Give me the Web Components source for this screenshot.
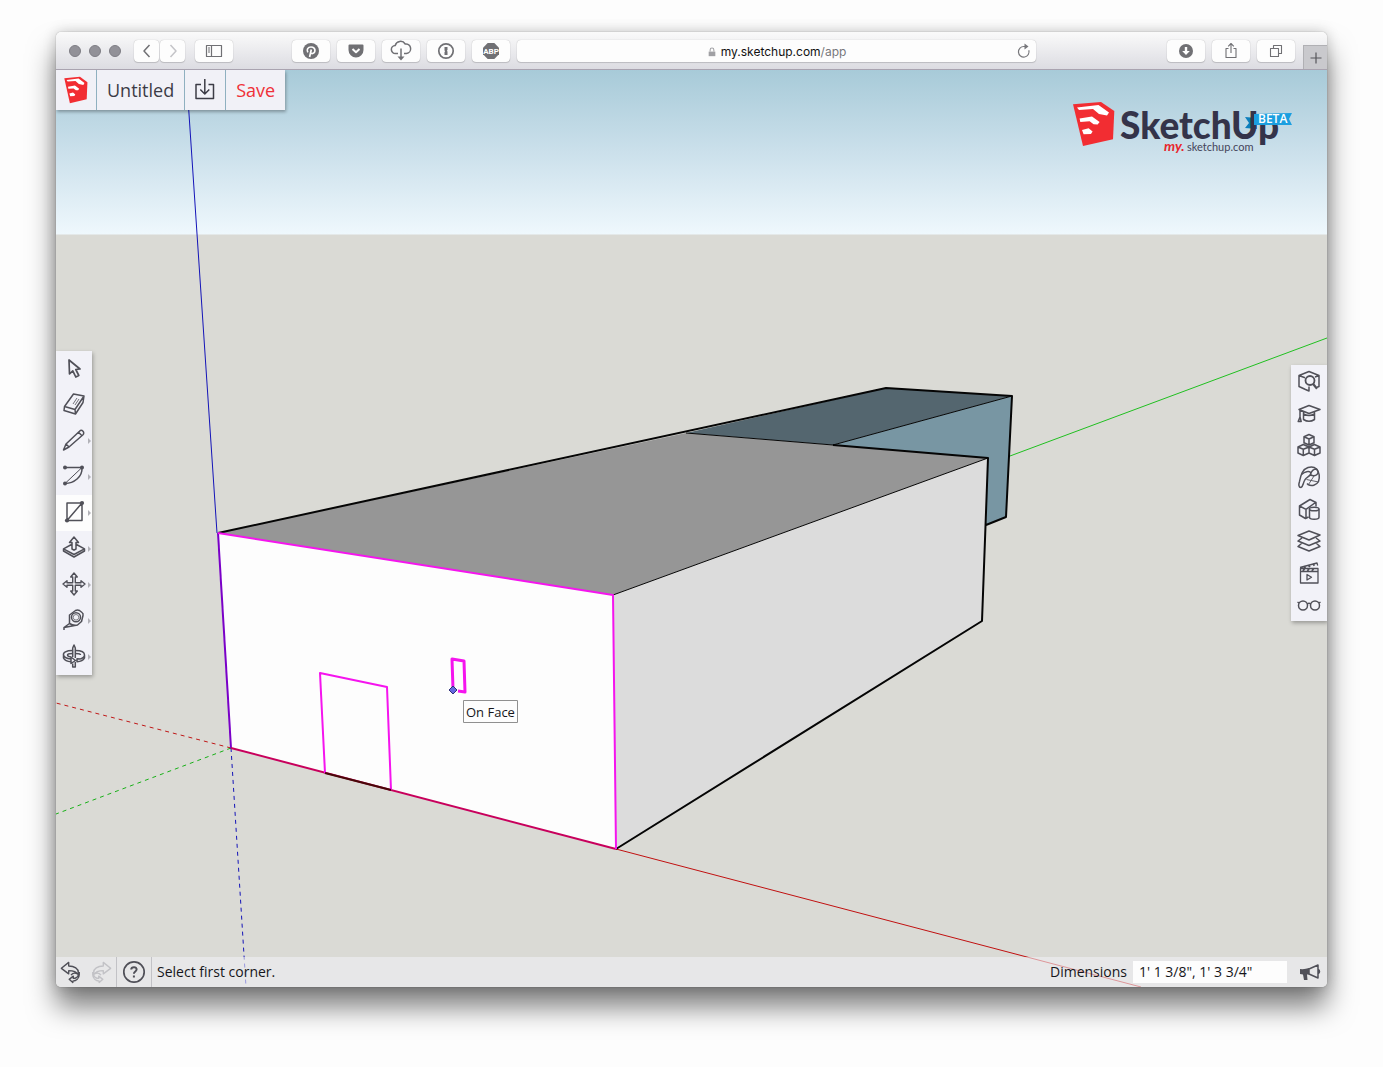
<!DOCTYPE html>
<html lang="en">
<head>
<meta charset="utf-8">
<title>my.sketchup.com/app</title>
<style>
  html, body { height: 100%; margin: 0; }
  body { background: #fdfdfd; font-family: "Open Sans", "Noto Sans", sans-serif; color: #16161a; }
</style>
</head>
<body>
<sketch-page></sketch-page>

<script>
const ICONS = {
  back: '<path d="M14.500 6 9 12l5.500 6"/>',
  forward: '<path d="M9.500 6 15 12l-5.500 6"/>',
  sidebar: '<g stroke-width="1.2"><path d="M4.500 6.500h15v11h-15zM9.500 6.500v11"/><path d="M6 9h2M6 11h2M6 13h2"/></g>',
  pinterest: '<circle cx="12" cy="12" r="8" fill="currentColor" stroke="none"/><path d="M8.800 13.300C7.200 10.500 9 8 12 8c2.600 0 4.200 1.600 3.900 3.800-.3 2.400-3 3.700-4.200 1.800M12.300 10.500 10.600 18" stroke="#fdfdfd" stroke-width="1.700"/>',
  pocket: '<path d="M4.500 6.500q0-1 1-1h13q1 0 1 1v4.500a7.500 7.500 0 0 1-15 0z" fill="currentColor" stroke="none"/><path d="m8.500 10 3.500 3.300L15.500 10" stroke="#fdfdfd" stroke-width="2"/>',
  cloud: '<path d="M9 14.500H6.500a4 4 0 0 1-.3-8 5.500 5.500 0 0 1 10-1.500 4.700 4.700 0 0 1 1.300 9.500H15M12 9.500V19"/><path d="M8.500 17.500h7L12 21.500z" fill="currentColor" stroke="none"/>',
  onepass: '<circle cx="12" cy="12" r="7.200" stroke-width="1.700"/><path d="M10.500 8h3v3l-.7.8.7.8V16h-3v-3l.7-.8-.7-.8z" fill="currentColor" stroke="none"/>',
  abp: '<path d="M8.700 4h6.600L20 8.700v6.600L15.300 20H8.700L4 15.300V8.700z" fill="currentColor" stroke="none"/><text x="12" y="15" font-size="8" font-weight="700" text-anchor="middle" fill="#fff" stroke="none" font-family="Roboto, sans-serif">ABP</text>',
  lock: '<path d="M4 11h16v11H4z" fill="currentColor" stroke="none"/><path d="M7.500 11V7a4.500 4.500 0 0 1 9 0v4" stroke-width="2.500"/>',
  reload: '<path d="M16.800 10.200A5.300 5.300 0 1 1 12 6.500h2" stroke-width="1.200"/><path d="m12.500 3.500 4 3-4 3z" fill="currentColor" stroke="none"/>',
  download: '<circle cx="12" cy="12" r="7" fill="currentColor" stroke="none"/><path d="M12 8v5" stroke="#fff" stroke-width="2.400"/><path d="m8.200 12 3.800 4 3.800-4z" fill="#fff" stroke="none"/>',
  share: '<g stroke-width="1.100"><path d="M9.500 9.500H7v9h10v-9h-2.500M12 14V4.500M9.200 7.300 12 4.500l2.800 2.800"/></g>',
  tabs: '<g stroke-width="1.100"><path d="M6.500 9.500h8v8h-8zM9.500 9.500v-3h8v8h-3"/></g>',
  plus: '<path d="M12 6.500v11M6.500 12h11" stroke-width="1.200"/>',
  mark: '<g transform="translate(.3 -1.200) scale(.56 .6)" stroke="none"><path d="M0 2.300 28 0l13.300 9-1.300 28.300L10 44z" fill="#f22d32"/><path d="M4 5.500 25.500 3 36 10.500l-2 3-8-1.500-6-5-14 1zM6.600 16.600l12.400-2 7.600 5.400-2 2.500-4-.2-4-3-9.300.7zM9 28l6.600-1.700 4 3.300-1.600 2.400-7.400.3z" fill="#fff"/></g>',
  save: '<path d="M8 6.500H3v14h17.500v-14h-5M11.800 1v15M7.300 11.500l4.500 4.500 4.500-4.500"/>',
  select: '<path d="m7 3 .5 14 3.300-3.200 3 6.200 3-1.500-3-6 4.200-.5z" stroke-width="1.700"/>',
  eraser: '<path d="M11.500 1 22 3l-1 6.500L13.500 21 2 17.500l.5-4zM2.500 13.500l10.500 3L22 3M13 16.500l.5 4.500"/><path d="m11 11 4-6M13 12l4-6" stroke-width=".8"/>',
  pencil: '<path d="M1.500 21 4 15 17.500 2.200a2.300 2.300 0 0 1 3.500 3.500L7 18zM4 15l3 3M16.500 3.200l3.500 3.500"/>',
  arc: '<path d="M3 2.500h17M20 2.500C20.500 12 12 18.500 3 18.500"/><path d="M20 2.500 3 18.500" stroke-width="1"/><g fill="currentColor" stroke="none"><circle cx="3" cy="2.500" r="2"/><circle cx="20" cy="2.500" r="2"/><circle cx="3" cy="18.500" r="2"/></g>',
  rect: '<path d="M5 2h15v17.500H5zM5 19.500 20 2"/><g fill="currentColor" stroke="none"><circle cx="20" cy="2" r="2.100"/><circle cx="5" cy="19.500" r="2.100"/></g>',
  push: '<path d="M10 12V5.500H7.500L12 0l4.500 5.500H14V12l-2 1.200zM9.500 7.500l-8 4.300L12 17.500l10.500-5.700-8-4.300M1.500 11.800V14L12 20l10.500-6v-2.200"/>',
  move: '<path d="m12 0 3.300 4h-2v5.700H19v-2l4 3.300-4 3.300v-2h-5.700V18h2L12 22l-3.300-4h2v-5.700H5v2L1 11l4-3.300v2h5.700V4h-2z" stroke-width="1.400"/>',
  tape: '<path d="M15.500 16 2 18.500v2.500M2 18.500l5.500-4V6l6-4.500q2-1 4 0l2.500 2q1.500 1 1 3l-1.500 6-4 3.500q-4 1-8-1.500"/><circle cx="14" cy="8.300" r="4.500"/><circle cx="14" cy="8.300" r="2.800" stroke-width=".7"/>',
  orbit: '<g transform="translate(0 -2)"><path d="M10.500 7.500C4 7.500 1 9.500 1.500 12S5 15.500 9 16M13.500 7.500c6 0 9 2 9 4.500 0 1.500-1.500 3-4 4M10.500 10.500c-3 0-5 .5-5 1.500s1.500 1.700 3.500 2M13.500 10.500c3 0 5 .5 5 1.500M1.500 12v3c1 2 4 3.500 7.500 3.700V16M9 14v6.500l4.500-3zM22.500 12v3c-1 2-4 3.500-7.500 3.800v-3l3.500.2"/><path d="M10.700 14V5L12 2l1.300 3v10M10.700 20.500V24h2.600v-5"/></g>',
  find: '<path d="M8.500 20.500 2 17.500V6.500L12 2.500l10 4v11l-2 .8M2 6.500l6 2.200M22 6.500l-4 1.500M12 17.500v4.500l-3.500-1.500"/><circle cx="13" cy="11.500" r="4.500" stroke-width="1.800"/><path d="m16 14.800 4 5" stroke-width="2.200"/>',
  learn: '<path d="M2 8.500 12 4.500l11 4-11 4zM6.500 11v7.500q5.500 3.500 11 0V11M6.500 13q5.500 3 11 0M3 9v7l-1.800 4.500h3L3 16"/>',
  cubes: '<path d="m12 1.500 5 2.300v6L12 12 7 9.800v-6zM7 3.800l5 2.200 5-2.200M12 6v6M6.300 11.500 12 14v6l-5.700 2.500L1 20v-6zM1 14l5.300 2.200L12 14M6.300 16.200v6.300M17.500 11.500 23 14v6l-5.500 2.500L12 20v-6zM12 14l5.500 2.200L23 14M17.500 16.200v6.300"/>',
  paint: '<path d="M4 22.500c-2.500 0-2.500-3-1.500-6C4 10 5 4.500 11 2.500c3-1 6-1 8.500 1.500 3 3 3.500 8.500 2 12.500-2 4-7 5-10.500 3l-1-1"/><path d="M4 22.500c2-1 2-4 3.500-7C9 12 12 12 13.500 9.500c1-2-1-3.500-3-3C8 7 6 8 4.500 9.500M13.500 9.500c2 2 5 1.500 6.500 0s1-4-.5-5.500c-2.500 0-5 1.500-6 5.500z"/><path d="M9.500 14.500 21.500 17M17 11l-5.500 8.500" stroke-width=".9"/>',
  shapes: '<path d="M11.500 20 8.500 21.500 2.500 18V9L13 2.500l6 3v4M2.500 9l6.500 3.300 9.500-6.800M9 12.300v9M12.500 12.300v8c0 2.600 9.500 2.600 9.500 0v-8"/><ellipse cx="17.200" cy="12" rx="4.800" ry="1.800"/>',
  layers: '<path d="m12 2 11 4-11 5L1 6.500zM5 9l-4 3 11 4.500L23 12l-4-3M5 14l-4 3.500L12 22l11-4.500-4-3.500"/>',
  scenes: '<g stroke-width="1.300"><path d="M3.500 10.500H21v11.500H3.500zM3.500 10.500V7.500h17.500v3M3 6.500 20 2l.7 2.500"/><path d="M7 5.500 8.500 7M11.500 4.300 13 6M16 3.200l1.500 1.500M6 10l1.500-2.500M10.500 10 12 7.500M15 10l1.500-2.500" stroke-width="1.800"/><path d="M10 13.500v5.500l4.500-2.700z"/></g>',
  glasses: '<circle cx="6" cy="12.500" r="4.500"/><circle cx="18" cy="12.500" r="4.500"/><path d="M10.200 11q1.800-1.500 3.600 0M2 10 .5 9M22 10l1.500-1"/>',
  undo: '<path d="M9.500 1.500 1.500 8l8 6v-3.500c5.500 0 9 2 10.500 4.500V12.500C20 8.500 16 5.500 9.500 5.500zM21 12v3c0 4-3.500 6.500-7 7v1.500L10 20l4.500-3.500V19c2.500 0 4.500-1 5.500-3.500M12 15.500c1.500-2 4.500-3 7.500-1"/>',
  help: '<circle cx="12" cy="12" r="10.200" stroke-width="1.700"/><path d="M9.200 9.500c.3-3.200 5.600-3 5.400 0-.1 2-2.700 2-2.700 4.300M11.900 15.500v2" stroke-width="2"/>',
  megaphone: '<path d="M2 9q5 .5 9-1v6.500H9l.5 5.500H6l-1-5.500-3-.5z" fill="currentColor" stroke="none"/><path d="m11 9 9-4v13l-9-4zM20.500 9.500q2 2 0 4" stroke-width="1.500"/>'
};

class Base extends HTMLElement {
  connectedCallback() {
    if (this.shadowRoot) return;
    const t = document.createElement('template');
    t.innerHTML = this.view();
    this.attachShadow({ mode: 'open' }).append(t.content.cloneNode(true));
  }
}

customElements.define('line-icon', class extends Base {
  view() {
    return `<style>:host{display:block;width:24px;height:24px;flex:none}svg{display:block;width:100%;height:100%;overflow:visible}</style>
    <svg viewBox="0 0 24 24" fill="none" stroke="currentColor" stroke-width="1.500" stroke-linejoin="round" aria-hidden="true">${ICONS[this.getAttribute('name')]}</svg>`;
  }
});

/* Rounded white button of the browser toolbar */
customElements.define('chrome-button', class extends Base {
  view() {
    return `<style>
      :host{display:block;width:38px;height:22px;flex:none}
      :host([narrow]){width:25px}
      button{display:flex;align-items:center;justify-content:center;width:100%;height:100%;padding:0;border:0;border-radius:4px;background:#fdfdfd;color:#707074;box-shadow:0 0 1px rgba(0,0,0,.3),0 1px 1px rgba(0,0,0,.14)}
      :host([dim]) button{color:#c4c4c8}
    </style><button type="button" aria-label="${this.getAttribute('label')}"><line-icon name="${this.getAttribute('icon')}"></line-icon></button>`;
  }
});

customElements.define('address-bar', class extends Base {
  view() {
    return `<style>
      :host{display:block;min-width:0}
      .bar{display:grid;grid-template-columns:24px 1fr 24px;align-items:center;height:22px;border-radius:4px;background:#fdfdfd;box-shadow:0 0 1px rgba(0,0,0,.3),0 1px 1px rgba(0,0,0,.14);font:12px/22px Inter,Roboto,sans-serif}
      label{grid-column:2;display:flex;align-items:center;justify-content:center;color:#77777b}
      label line-icon{width:10px;height:10px;margin-right:4px;color:#a0a0a4}
      input{field-sizing:content;font:inherit;color:#111;border:0;padding:0;background:none;outline:0}
      button{padding:0;border:0;background:none;color:#77777b}
    </style>
    <div class="bar"><label><line-icon name="lock"></line-icon><input aria-label="Address" value="my.sketchup.com"><span>/app</span></label>
    <button type="button" aria-label="Reload"><line-icon name="reload"></line-icon></button></div>`;
  }
});

customElements.define('browser-bar', class extends Base {
  view() {
    return `<style>
      :host{display:flex;align-items:center;height:38px;box-sizing:border-box;padding-left:13px;border-bottom:1px solid #a9a3b0;background:linear-gradient(#fafafa,#dcdce2)}
      .dots,.pair,.group{display:flex}
      .dots{gap:8px;margin-right:13px}
      .dots i{width:10px;height:10px;border:1px solid #7e7d84;border-radius:50%;background:#929198}
      .pair{gap:1px;margin-right:10px}
      .group{gap:7px}
      .gap{flex:59 1 0}
      address-bar{flex:520 1 0;margin-left:7px}
      .wide{flex:131 1 0}
      .tab{align-self:flex-end;display:flex;align-items:center;justify-content:center;width:24px;height:24px;margin-left:8px;padding:0;border:1px solid #b0b0b4;border-width:1px 0 0 1px;background:#c9c9cd;color:#55555a}
    </style>
    <div class="dots"><i></i><i></i><i></i></div>
    <div class="pair"><chrome-button narrow icon="back" label="Back"></chrome-button><chrome-button narrow dim icon="forward" label="Forward"></chrome-button></div>
    <chrome-button icon="sidebar" label="Sidebar"></chrome-button>
    <div class="gap"></div>
    <div class="group">
      <chrome-button icon="pinterest" label="Pinterest"></chrome-button>
      <chrome-button icon="pocket" label="Pocket"></chrome-button>
      <chrome-button icon="cloud" label="Cloud download"></chrome-button>
      <chrome-button icon="onepass" label="Passwords"></chrome-button>
      <chrome-button icon="abp" label="Ad blocker"></chrome-button>
    </div>
    <address-bar></address-bar>
    <div class="wide"></div>
    <div class="group">
      <chrome-button icon="download" label="Downloads"></chrome-button>
      <chrome-button icon="share" label="Share"></chrome-button>
      <chrome-button icon="tabs" label="Tabs"></chrome-button>
    </div>
    <button class="tab" type="button" aria-label="New tab"><line-icon name="plus"></line-icon></button>`;
  }
});

/* 3D model view, drawn in model-canvas units */
customElements.define('model-view', class extends Base {
  view() {
    return `<style>:host{display:block;min-height:0}svg{display:block;width:100%;height:100%}</style>
    <svg viewBox="56 70 1271 917" preserveAspectRatio="xMidYMid slice" fill="none" stroke-linejoin="round" role="img" aria-label="Model">
      <defs><linearGradient id="sky" x2="0" y2="1"><stop offset="0" stop-color="#a7cad8"/><stop offset=".5" stop-color="#cbe0eb"/><stop offset="1" stop-color="#eff8fd"/></linearGradient></defs>
      <path d="M56 69h1271v166H56z" fill="url(#sky)"/>
      <path d="M56 234.500h1271V987H56z" fill="#dadad5"/>
      <path d="M231 748 56 703" stroke="#c01818" stroke-dasharray="4 4"/>
      <path d="M231 748 56 814" stroke="#18b018" stroke-dasharray="4 4"/>
      <path d="m231 748 15 239" stroke="#1414b8" stroke-dasharray="4 4"/>
      <path d="M1010 456 1327 338" stroke="#20c020"/>
      <path d="m616 849 525 138" stroke="#c01010"/>
      <path d="m686 433 200-45 126 8-179 49z" fill="#54666f"/>
      <path d="m833 445 179-49-6 121-20 8 2-67z" fill="#7896a3"/>
      <path d="m218 533 468-100 302 25-375 137z" fill="#969696"/>
      <path d="m613 595 375-137-6 163-366 228z" fill="#dcdcdc"/>
      <path d="m218 533 395 62 3 254-385-101z" fill="#fdfdfd"/>
      <g stroke="#050505"><path d="m686 433 147 12 179-49M613 595l375-137"/>
      <path d="m218 533 668-145 126 8-6 121-20 8M833 445l155 13-6 163-366 228" stroke-width="2"/></g>
      <path d="m186 69 31 464" stroke="#1414b8"/>
      <path d="m218 533 13 215" stroke="#7a00c8" stroke-width="2"/>
      <path d="m231 748 385 101" stroke="#c8005c" stroke-width="2"/>
      <path d="m218 533 395 62 3 254M325 773l-5-100 67 14 4 103" stroke="#f514ee" stroke-width="2"/>
      <path d="m325 773 66 17" stroke="#480808" stroke-width="2"/>
      <path d="m453 689-1-30 12 2 1 31-7-1" stroke="#f514ee" stroke-width="3"/>
      <path d="m453 686 4 4-4 4-4-4z" fill="#6666e0" stroke="#30307a"/>
      <path d="M463.500 700.500h54v22h-54z" fill="#fdfdfd" stroke="#909090"/>
      <text x="466" y="717" font-family="Open Sans, Noto Sans, sans-serif" font-size="13" fill="#16161a">On Face</text>
    </svg>`;
  }
});

customElements.define('sketch-logo', class extends Base {
  view() {
    return `<style>:host{display:block;width:220px;height:56px}svg{display:block;width:100%;height:100%;overflow:visible}</style>
    <svg viewBox="0 0 220 56" role="img" aria-label="SketchUp beta">
      <path d="M0 3.300 28 1l13.300 9-1.300 28.300L10 45z" fill="#f22d32"/>
      <path d="M4 6.500 25.500 4 36 11.500l-2 3-8-1.500-6-5-14 1zM6.600 17.600l12.400-2 7.600 5.400-2 2.500-4-.2-4-3-9.300.7zM9 29l6.600-1.700 4 3.300-1.600 2.400-7.400.3z" fill="#fff"/>
      <path d="m172 16 12 1v11l-12-1 4-5z" fill="#0d7fbd"/>
      <text x="47" y="38" font-family="Lato, sans-serif" font-weight="900" font-size="37" fill="#34344a">SketchUp</text>
      <path d="m181 13 38-1-3 6 3 6h-38z" fill="#1b9fe0"/>
      <text x="185" y="22" font-family="Open Sans, sans-serif" font-weight="600" font-size="12" fill="#fff">BETA</text>
      <text x="91" y="50" font-family="Lato, sans-serif" font-weight="700" font-style="italic" font-size="14" fill="#e8262c">my.</text>
      <text x="114" y="50" font-family="Lato, sans-serif" font-size="11" fill="#44445a">sketchup.com</text>
    </svg>`;
  }
});

customElements.define('file-bar', class extends Base {
  view() {
    return `<style>
      :host{display:flex;gap:1px;height:40px;background:#8fb0c0;box-shadow:1px 2px 3px rgba(0,0,0,.3)}
      button{display:flex;align-items:center;justify-content:center;box-sizing:border-box;border:0;padding:0 10px;background:#f1f1f7;color:#3c3c46;font:18px/24px "Open Sans","Noto Sans",sans-serif}
      .icon{width:40px;padding:0}
      .save{color:#ef3038}
    </style>
    <button class="icon" type="button" aria-label="Home"><line-icon name="mark"></line-icon></button>
    <button type="button">Untitled</button>
    <button class="icon" type="button" aria-label="Export"><line-icon name="save"></line-icon></button>
    <button class="save" type="button">Save</button>`;
  }
});

customElements.define('tool-palette', class extends Base {
  view() {
    return `<style>:host{display:flex;flex-direction:column;width:36px;background:#f2f2f8;box-shadow:1px 2px 4px rgba(0,0,0,.3)}</style><slot></slot>`;
  }
});

customElements.define('tool-button', class extends Base {
  view() {
    return `<style>
      :host{display:block;height:36px}
      :host([compact]){height:32px}
      button{display:grid;grid-template-columns:6px 24px 6px;align-items:center;width:100%;height:100%;padding:0;border:0;background:none;color:#505058}
      :host([active]) button{background:#fdfdfd}
      line-icon{grid-column:2}
      i{justify-self:end;border:solid transparent;border-width:3px 0 3px 3px;margin-right:1px}
      :host([more]) i{border-left-color:#b2b2b8}
    </style><button type="button" aria-label="${this.getAttribute('label')}"><line-icon name="${this.getAttribute('icon')}"></line-icon><i></i></button>`;
  }
});

customElements.define('status-bar', class extends Base {
  view() {
    return `<style>
      :host{display:flex;align-items:center;height:30px;background:rgba(240,240,245,.6);font-size:14px;line-height:20px}
      button{display:flex;align-items:center;justify-content:center;height:30px;padding:0;border:0;background:none;color:#505058;box-sizing:border-box}
      .undo,.redo{width:30px}
      .redo{color:#c2c2c6}
      .redo line-icon{transform:scaleX(-1)}
      .undo line-icon,.redo line-icon{width:22px;height:22px}
      .help{width:36px;border:solid #c2c2c6;border-width:0 1px}
      .msg{flex:1;padding-left:5px}
      label{margin-right:6px}
      input{box-sizing:border-box;width:154px;height:22px;padding:0 6px 2px;border:0;background:#fdfdfd;color:inherit;font:inherit}
      .news{width:40px;padding-left:6px}
    </style>
    <button class="undo" type="button" aria-label="Undo"><line-icon name="undo"></line-icon></button>
    <button class="redo" type="button" aria-label="Redo"><line-icon name="undo"></line-icon></button>
    <button class="help" type="button" aria-label="Help"><line-icon name="help"></line-icon></button>
    <span class="msg">Select first corner.</span>
    <label for="dim">Dimensions</label><input id="dim" value="1' 1 3/8&quot;, 1' 3 3/4&quot;">
    <button class="news" type="button" aria-label="Feedback"><line-icon name="megaphone"></line-icon></button>`;
  }
});

customElements.define('app-window', class extends Base {
  view() {
    return `<style>
      :host{display:flex;flex-direction:column;flex:1;min-height:0;border-radius:5px;box-shadow:0 0 1px rgba(0,0,0,.5),0 0 14px rgba(0,0,0,.2),0 20px 28px rgba(0,0,0,.5)}
      browser-bar{border-radius:5px 5px 0 0}
      main{flex:1;min-height:0;display:grid;grid-template:minmax(0,1fr)/minmax(0,1fr);border-radius:0 0 5px 5px;overflow:hidden}
      main>*{grid-area:1/1}
      file-bar{place-self:start}
      sketch-logo{place-self:start end;margin:31px 34px 0 0}
      .left{place-self:center start;margin-bottom:32px}
      .right{place-self:center end;margin-bottom:72px}
      status-bar{align-self:end}
    </style>
    <browser-bar></browser-bar>
    <main>
      <model-view></model-view>
      <file-bar></file-bar>
      <sketch-logo></sketch-logo>
      <tool-palette class="left">
        <tool-button icon="select" label="Select"></tool-button>
        <tool-button icon="eraser" label="Eraser"></tool-button>
        <tool-button more icon="pencil" label="Line"></tool-button>
        <tool-button more icon="arc" label="Arc"></tool-button>
        <tool-button more active icon="rect" label="Rectangle"></tool-button>
        <tool-button more icon="push" label="Push/Pull"></tool-button>
        <tool-button more icon="move" label="Move"></tool-button>
        <tool-button more icon="tape" label="Tape measure"></tool-button>
        <tool-button more icon="orbit" label="Orbit"></tool-button>
      </tool-palette>
      <tool-palette class="right">
        <tool-button compact icon="find" label="Entity info"></tool-button>
        <tool-button compact icon="learn" label="Instructor"></tool-button>
        <tool-button compact icon="cubes" label="Components"></tool-button>
        <tool-button compact icon="paint" label="Materials"></tool-button>
        <tool-button compact icon="shapes" label="Styles"></tool-button>
        <tool-button compact icon="layers" label="Layers"></tool-button>
        <tool-button compact icon="scenes" label="Scenes"></tool-button>
        <tool-button compact icon="glasses" label="Display"></tool-button>
      </tool-palette>
      <status-bar></status-bar>
    </main>`;
  }
});

customElements.define('sketch-page', class extends Base {
  view() {
    return `<style>:host{display:flex;box-sizing:border-box;height:100vh;padding:32px 56px 80px}</style><app-window></app-window>`;
  }
});
</script>
</body>
</html>
